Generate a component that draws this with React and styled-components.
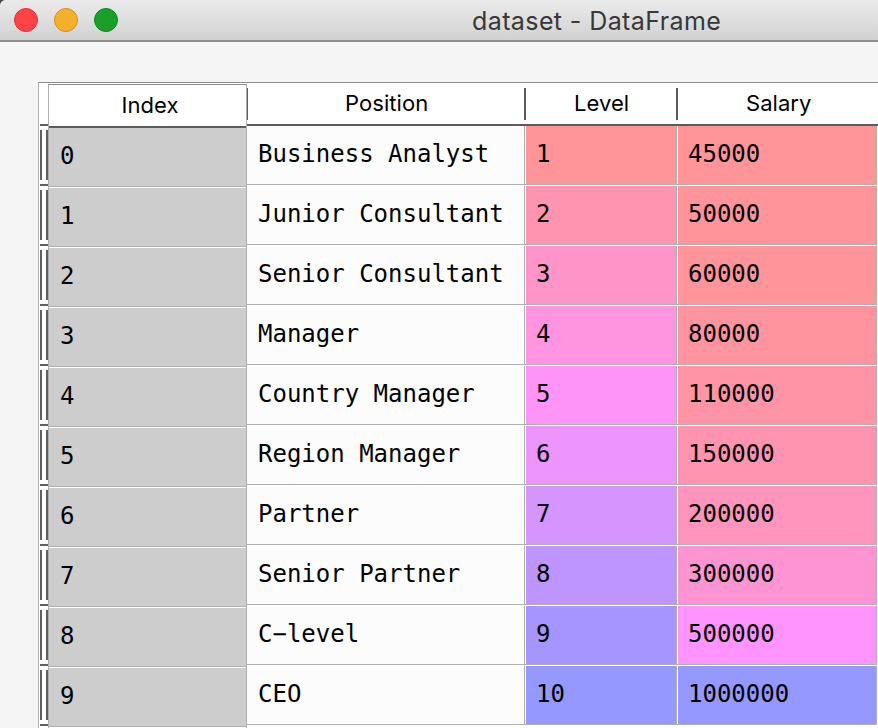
import React from 'react';
import styled, { createGlobalStyle } from 'styled-components';

const GlobalStyle = createGlobalStyle`
  * { box-sizing: border-box; }
  html, body { margin: 0; height: 100%; overflow: hidden; background: #4a4a4a; }
`;

const Window = styled.div`
  width: 878px;
  height: 728px;
  overflow: hidden;
  background: #f5f5f5;
  border-top-left-radius: 6px;
  color: #000;
`;

const TitleBar = styled.header`
  display: flex;
  align-items: center;
  height: 42px;
  padding-left: 14px;
  background: linear-gradient(#ebebeb, #d1d1d1);
  border-bottom: 2px solid #8e8e8e;
`;

const Lights = styled.div`
  display: flex;
  gap: 16px;
`;

const Light = styled.span`
  width: 24px;
  height: 24px;
  border-radius: 50%;
  background: ${(p) => p.$fill};
  border: 1px solid ${(p) => p.$edge};
`;

const Title = styled.h1`
  margin: 2px 0 0 354px;
  font: 400 25px/30px Inter, sans-serif;
  letter-spacing: 0.4px;
  color: #383838;
  white-space: pre;
`;

const Table = styled.main`
  display: flex;
  height: 646px;
  margin: 40px 0 0 38px;
  background: #fff;
  border-top: 1px solid #8c8c8c;
  border-left: 1px solid #b0b0b0;
`;

const Gutter = styled.div`
  width: 9px;
  padding: 41px 0 0 1px;
  flex: none;
`;

const GutterMark = styled.div`
  height: 60px;
  border-top: 2px solid #606060;
  padding-top: 4px;
`;

const GutterBars = styled.div`
  height: 50px;
  border-left: 2px solid #606060;
  border-right: 2px solid #606060;
`;

const IndexPane = styled.section`
  width: 199px;
  flex: none;
  margin-top: 1px;
  border: 1px solid #b0b0b0;
  border-top-color: #8c8c8c;
  border-bottom: 0;
`;

const Heading = styled.div`
  display: flex;
  align-items: center;
  padding-bottom: 2px;
  font: 400 22px/26px Inter, sans-serif;
  letter-spacing: 0.05px;
`;

const IndexHeading = styled(Heading)`
  justify-content: center;
  height: 43px;
  padding-left: 5px;
  border-bottom: 2px solid #5c5c5c;
`;

const ColumnLabel = styled.span`
  flex: 1;
  padding-left: ${(p) => p.$inset}px;
`;

const Divider = styled.i`
  width: ${(p) => p.$width}px;
  height: 32px;
  margin-top: 2px;
  background: #5c5c5c;
`;

const Cell = styled.div`
  display: flex;
  align-items: flex-end;
  padding: 0 0 16px 11px;
  background: ${(p) => p.$fill};
  border-top: ${(p) => (p.$first ? 0 : 1)}px solid #fff;
  border-bottom: 1px solid #b0b0b0;
  font: 24px/28px "DejaVu Sans Mono", monospace;
  white-space: pre;
`;

const IndexCell = styled(Cell)`
  height: ${(p) => (p.$first ? 59 : 60)}px;
`;

const PositionCell = styled(Cell)`
  border-right: 1px solid #b0b0b0;
`;

const ValueCell = styled(Cell)`
  box-shadow: inset 1px 0 #fff;
  border-right: 1px solid #b0b0b0;
`;

const Data = styled.section`
  flex: none;
  width: 631px;
`;

const HeadRow = styled.div`
  display: grid;
  grid-template-columns: 279px 152px 200px;
  height: 43px;
  border-bottom: 2px solid #5c5c5c;
`;

const DataRow = styled.div`
  display: grid;
  grid-template-columns: 278px 152px 200px;
  height: ${(p) => (p.$first ? 59 : 60)}px;
`;

const rows = [
  ['Business Analyst', '45000', '#ff9499', '#ff9499'],
  ['Junior Consultant', '50000', '#ff94b1', '#ff949a'],
  ['Senior Consultant', '60000', '#ff94c8', '#ff949b'],
  ['Manager', '80000', '#ff94e0', '#ff949f'],
  ['Country Manager', '110000', '#ff94f8', '#ff94a7'],
  ['Region Manager', '150000', '#ee94ff', '#ff94b0'],
  ['Partner', '200000', '#d694ff', '#ff94bc'],
  ['Senior Partner', '300000', '#be94ff', '#ff94d2'],
  ['C−level', '500000', '#a694ff', '#ff94ff'],
  ['CEO', '1000000', '#9498ff', '#9498ff'],
];

export default function App() {
  return (
    <>
      <GlobalStyle />
      <Window>
        <TitleBar>
          <Lights>
            <Light $fill="#ff4347" $edge="#dc3238" />
            <Light $fill="#f5b02b" $edge="#d18d27" />
            <Light $fill="#1a9f29" $edge="#148421" />
          </Lights>
          <Title>dataset - DataFrame</Title>
        </TitleBar>
        <Table>
          <Gutter>
            {[...rows, null].map((_, i) => (
              <GutterMark key={i}>{i < rows.length && <GutterBars />}</GutterMark>
            ))}
          </Gutter>
          <IndexPane>
            <IndexHeading>Index</IndexHeading>
            {rows.map((_, i) => (
              <IndexCell key={i} $first={i === 0} $fill="#cdcdcd">{i}</IndexCell>
            ))}
          </IndexPane>
          <Data>
            <HeadRow>
              <Heading>
                <Divider $width={1} />
                <ColumnLabel $inset={97}>Position</ColumnLabel>
                <Divider $width={2} />
              </Heading>
              <Heading>
                <ColumnLabel $inset={48}>Level</ColumnLabel>
                <Divider $width={2} />
              </Heading>
              <Heading>
                <ColumnLabel $inset={68}>Salary</ColumnLabel>
              </Heading>
            </HeadRow>
            {rows.map(([position, salary, levelFill, salaryFill], i) => (
              <DataRow key={position} $first={i === 0}>
                <PositionCell $first={i === 0} $fill="#fcfcfc">{position}</PositionCell>
                <ValueCell $first={i === 0} $fill={levelFill}>{i + 1}</ValueCell>
                <ValueCell $first={i === 0} $fill={salaryFill}>{salary}</ValueCell>
              </DataRow>
            ))}
          </Data>
        </Table>
      </Window>
    </>
  );
}
